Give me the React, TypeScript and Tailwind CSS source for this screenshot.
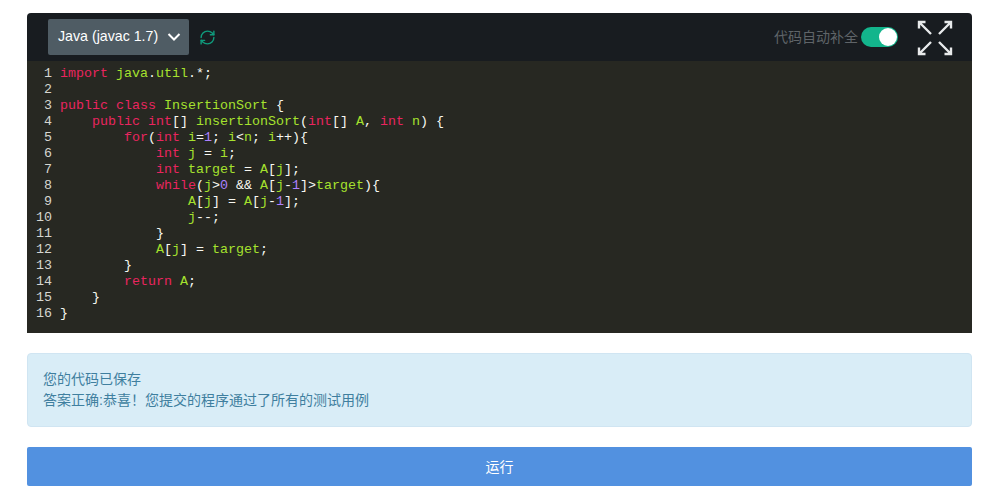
import { RefreshCw } from "lucide-react";

const code = [
  "import java.util.*;",
  "",
  "public class InsertionSort {",
  "    public int[] insertionSort(int[] A, int n) {",
  "        for(int i=1; i<n; i++){",
  "            int j = i;",
  "            int target = A[j];",
  "            while(j>0 && A[j-1]>target){",
  "                A[j] = A[j-1];",
  "                j--;",
  "            }",
  "            A[j] = target;",
  "        }",
  "        return A;",
  "    }",
  "}",
];

const keywords = ["import", "public", "class", "int", "for", "while", "return"];

function tokenClass(token: string) {
  if (keywords.includes(token)) return "text-[#e9255f]";
  if (/^\d+$/.test(token)) return "text-[#ae81ff]";
  if (/^\w+$/.test(token)) return "text-[#a6e22e]";
  return "text-[#f8f8f2]";
}

function CodeLine({ text }: { text: string }) {
  const tokens = text.match(/\w+|\W/g) ?? [];
  return (
    <div className="h-4 whitespace-pre">
      {tokens.map((token, i) => (
        <span key={i} className={tokenClass(token)}>
          {token}
        </span>
      ))}
    </div>
  );
}

function ExpandIcon() {
  return (
    <svg width="36" height="36" viewBox="0 0 36 36" fill="none" stroke="#e8eaeb" strokeWidth="2.4">
      <path d="M2 8.500V2h6.500M2 2l12 12" />
      <path d="M34 8.500V2h-6.500M34 2L22 14" />
      <path d="M2 27.500V34h6.500M2 34l12-12" />
      <path d="M34 27.500V34h-6.500M34 34L22 22" />
    </svg>
  );
}

export default function App() {
  return (
    <div className="h-[491px] w-[1001px] overflow-hidden bg-white pl-[27px] pt-[13px] font-['Liberation_Sans','Noto_Sans_CJK_SC',sans-serif]">
      <div className="w-[945px] overflow-hidden rounded-t-[4px]">
        <div className="flex h-12 items-center bg-[#181c20] pl-[21px] pr-[19px]">
          <div className="flex h-9 w-[141px] items-center justify-between rounded-[2px] bg-[#4f5c64] pl-[10px] pr-[8px] text-[14.2px] text-white">
            <span>Java (javac 1.7)</span>
            <svg width="14" height="8" viewBox="0 0 14 8" fill="none" stroke="currentColor" strokeWidth="2">
              <path d="M1.500 1l5.500 5.500L12.500 1" />
            </svg>
          </div>
          <RefreshCw size={17} className="ml-[10px] text-[#0f9a7c]" />
          <span className="ml-auto text-sm text-[#5f6468]">代码自动补全</span>
          <div className="ml-[3px] flex h-5 w-[37px] items-center justify-end rounded-full bg-[#13b58c] pr-[1px]">
            <div className="size-[18px] rounded-full bg-white" />
          </div>
          <div className="ml-[19px] mt-[1px]">
            <ExpandIcon />
          </div>
        </div>
        <div className="flex h-[272px] bg-[#272822] pt-[5px] font-['Liberation_Mono',monospace] text-[13.33px] leading-4">
          <div className="w-[25px] shrink-0 text-right text-[#d6d6d0]">
            {code.map((_, i) => (
              <div key={i} className="h-4">
                {i + 1}
              </div>
            ))}
          </div>
          <div className="pl-2">
            {code.map((line, i) => (
              <CodeLine key={i} text={line} />
            ))}
          </div>
        </div>
      </div>
      <div className="mt-5 h-[74px] w-[945px] rounded-[4px] border border-[#d0e5f2] bg-[#d9edf7] px-[15px] py-[15px] text-sm leading-[21px] text-[#3f7f9f]">
        <p>您的代码已保存</p>
        <p>答案正确:恭喜！您提交的程序通过了所有的测试用例</p>
      </div>
      <button
        type="button"
        className="mt-5 h-[39px] w-[945px] rounded-[2px] bg-[#5291e0] text-sm text-white"
      >
        运行
      </button>
    </div>
  );
}
